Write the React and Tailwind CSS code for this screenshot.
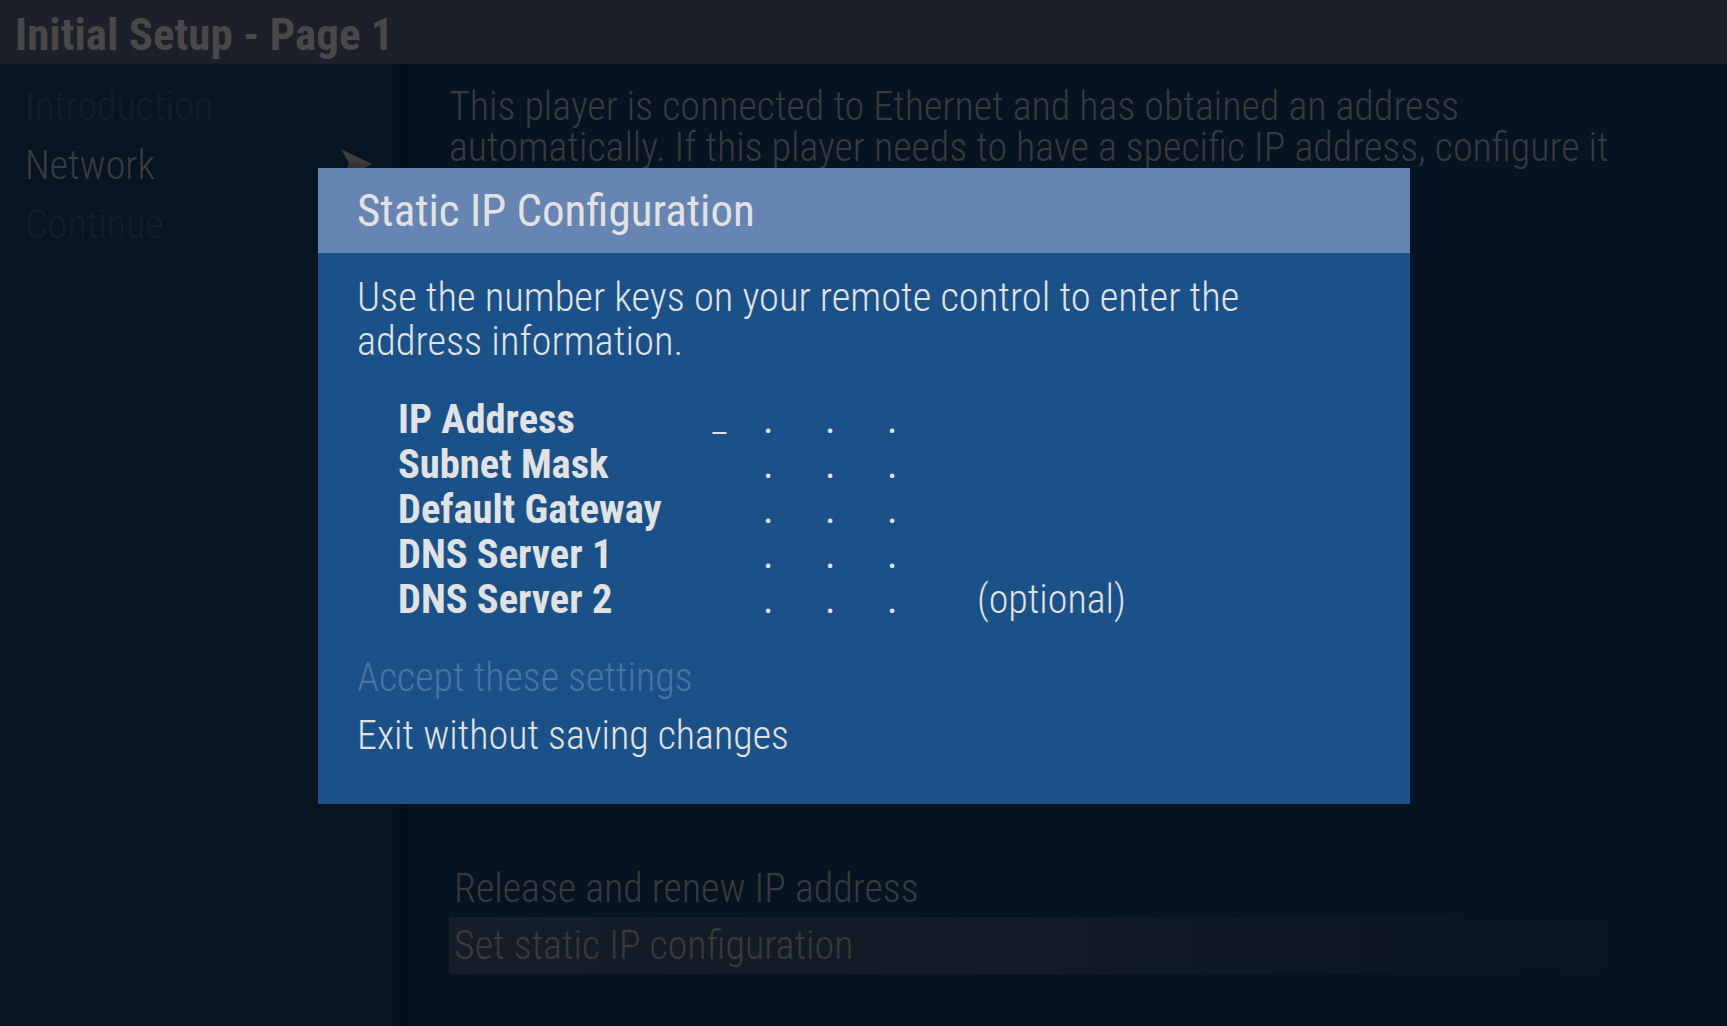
import React from "react";

const font = { fontFamily: '"Roboto Condensed", Roboto, "Liberation Sans", sans-serif' };

const fields = [
  { label: "IP Address", cursor: true },
  { label: "Subnet Mask" },
  { label: "Default Gateway" },
  { label: "DNS Server 1" },
  { label: "DNS Server 2", note: "(optional)" },
];

function Dot() {
  return <span className="inline-block w-[4px] text-center font-normal text-[40px] leading-[45px]">.</span>;
}

function FieldRow({ label, cursor, note }) {
  return (
    <div className="flex items-center h-[45px]">
      <div className="w-[307px] font-bold text-[40.5px] leading-[45px]">{label}</div>
      <div className="w-[58px] pl-[7px] font-light text-[38px] leading-[45px]">{cursor ? "_" : ""}</div>
      <Dot />
      <div className="w-[58px]" />
      <Dot />
      <div className="w-[58px]" />
      <Dot />
      {note && <div className="ml-[86px] font-light text-[40px] leading-[45px]">{note}</div>}
    </div>
  );
}

export default function App() {
  return (
    <div className="relative w-[1727px] h-[1026px] overflow-hidden bg-[#061320]" style={font}>
      {/* title bar */}
      <div className="h-[64px] bg-[#1b202b] flex items-center pl-[15px] pt-[4px]">
        <h1 className="text-[45px] font-bold text-[#4a4846] leading-none">Initial Setup - Page 1</h1>
      </div>

      <div className="flex h-[962px]">
        {/* sidebar */}
        <div className="w-[399px] bg-[#071522] pt-[13px] pl-[25px] relative">
          <div className="text-[40px] font-light leading-[59px] text-[#161c24]">Introduction</div>
          <div className="text-[40px] font-light leading-[59px] text-[#3c3c3c]">Network</div>
          <div className="text-[40px] font-light leading-[59px] text-[#161c24]">Continue</div>
          <svg className="absolute left-[341px] top-[85px]" width="32" height="32" viewBox="0 0 32 32">
            <polygon points="0,0 31,15 3,30 8,14" fill="#3d3d3d" />
            <polygon points="8,14 31,15 3,30" fill="#333333" />
          </svg>
        </div>
        <div className="w-[9px] bg-[#040f1a]" />

        {/* main */}
        <div className="flex-1 flex flex-col pl-[41px] pt-[22px]">
          <p className="text-[40px] font-light leading-[41px] text-[#3a3a3a] w-[1200px]">
            This player is connected to Ethernet and has obtained an address automatically. If this player needs to have a specific IP address, configure it
          </p>
          <div className="mt-auto mb-[52px]">
            <div className="text-[40px] font-light leading-[57px] text-[#3a3a3a] pl-[5px]">Release and renew IP address</div>
            <div className="h-[57px] w-[1190px] bg-gradient-to-r from-[#161d28] via-[#111a25] to-[#061320] text-[40px] font-light leading-[57px] text-[#3a3a3a] pl-[5px]">
              Set static IP configuration
            </div>
          </div>
        </div>
      </div>

      {/* modal */}
      <div className="absolute left-[318px] top-[168px] w-[1092px] h-[636px] bg-[#1a5189] text-[#e2e2e2]">
        <div className="h-[85px] bg-[#6685b2] flex items-center pl-[39px]">
          <div className="text-[45px] font-normal leading-none">Static IP Configuration</div>
        </div>
        <div className="pl-[39px] pt-[22px]">
          <p className="text-[40.5px] font-light leading-[44px] w-[1000px]">
            Use the number keys on your remote control to enter the address information.
          </p>
          <div className="pl-[41px] mt-[34px]">
            {fields.map((f) => (
              <FieldRow key={f.label} {...f} />
            ))}
          </div>
          <div className="mt-[27px]">
            <div className="text-[40px] font-light leading-[58px] text-[#4a74a3]">Accept these settings</div>
            <div className="text-[40px] font-light leading-[58px]">Exit without saving changes</div>
          </div>
        </div>
      </div>
    </div>
  );
}
